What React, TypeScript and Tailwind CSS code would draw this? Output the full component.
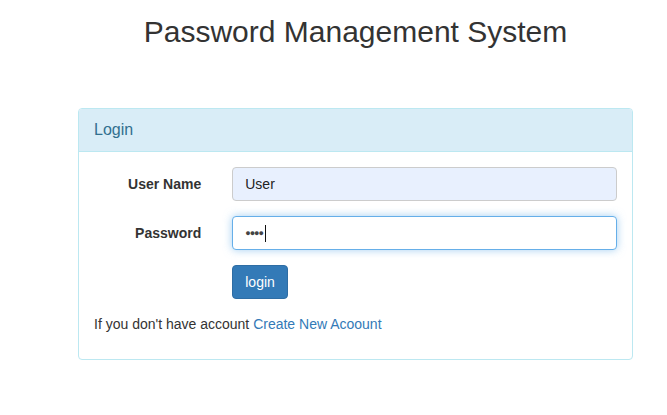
import React from "react";

export default function App() {
  return (
    <div
      className="w-[667px] h-[415px] bg-white text-[#333] text-[14px] leading-[20px] overflow-hidden"
      style={{ fontFamily: '"Liberation Sans", Arial, sans-serif' }}
    >
      <div className="pl-[63px] pr-[19px]">
        <div className="px-[15px]">
          <h1 className="text-center text-[30px] leading-[33px] pt-[15px] text-[#333] font-normal">
            Password Management System
          </h1>
          <div className="mt-[60px] border border-[#bce8f1] rounded-[4px] bg-white">
            <div className="h-[43px] flex items-center px-[15px] bg-[#d9edf7] border-b border-[#bce8f1] rounded-t-[3px] text-[#31708f] text-[16px]">
              Login
            </div>
            <div className="p-[15px]">
              <div className="-mx-[15px]">
                <div className="flex items-center mb-[15px]">
                  <label className="w-[25%] pr-[16px] text-right font-bold">User Name</label>
                  <div className="flex-1 px-[15px]">
                    <div className="h-[34px] flex items-center px-[12px] bg-[#e8f0fe] border border-[#ccc] rounded-[4px] text-[#222]">
                      User
                    </div>
                  </div>
                </div>
                <div className="flex items-center mb-[15px]">
                  <label className="w-[25%] pr-[16px] text-right font-bold">Password</label>
                  <div className="flex-1 px-[15px]">
                    <div className="h-[34px] flex items-center px-[12px] bg-white border border-[#66afe9] rounded-[4px] shadow-[0_0_8px_rgba(102,175,233,0.6)]">
                      <span className="text-[9px] tracking-[-1px] text-[#444] leading-none">●●●●</span>
                      <span className="ml-[2px] w-px h-[17px] bg-[#111]"></span>
                    </div>
                  </div>
                </div>
                <div className="flex mb-[15px]">
                  <div className="w-[25%]"></div>
                  <div className="flex-1 px-[15px]">
                    <button className="h-[34px] px-[12px] bg-[#337ab7] border border-[#2e6da4] rounded-[4px] text-white text-[14px]">
                      login
                    </button>
                  </div>
                </div>
              </div>
              <p className="mb-[10px]">
                If you don't have account <a className="text-[#337ab7]">Create New Acoount</a>
              </p>
            </div>
          </div>
        </div>
      </div>
    </div>
  );
}
